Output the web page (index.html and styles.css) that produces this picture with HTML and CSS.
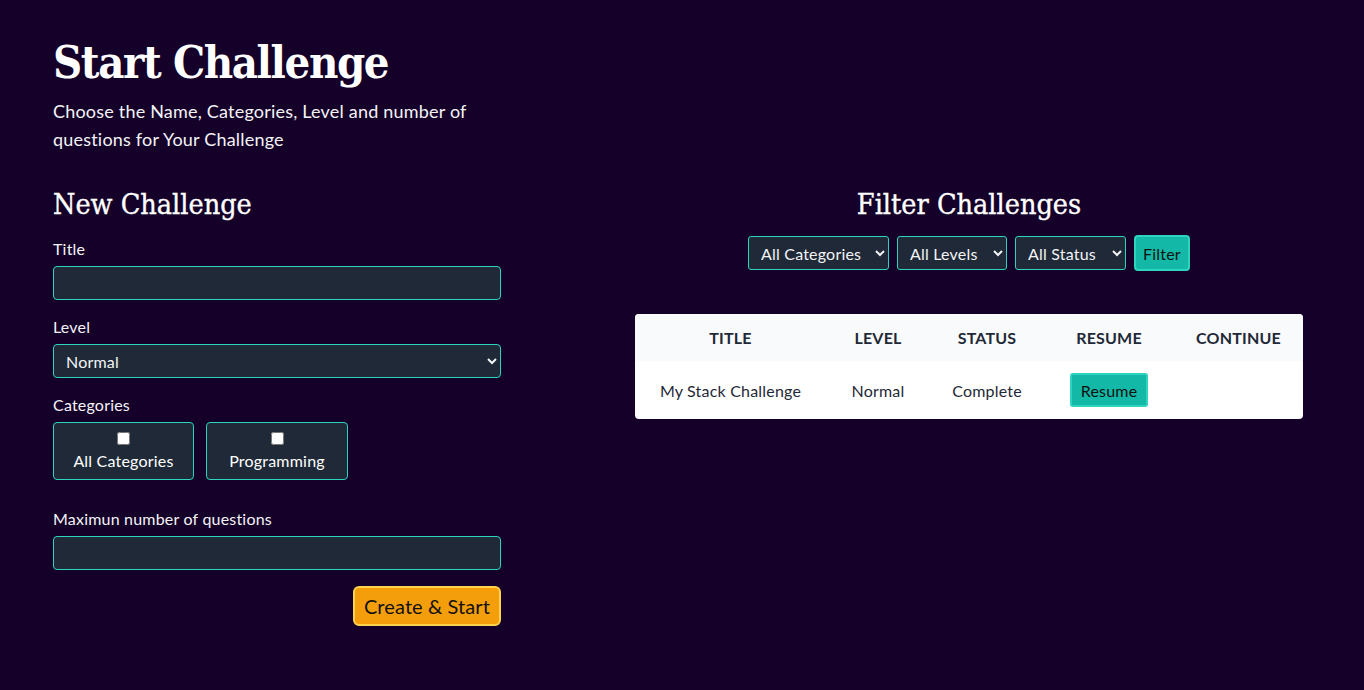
FILE: index.html
```html
<!DOCTYPE html>
<html lang="en">
<head>
<meta charset="utf-8">
<title>Start Challenge</title>
<link rel="stylesheet" href="styles.css">
</head>
<body>
<main class="page">
  <header class="intro">
    <h1 class="title">Start Challenge</h1>
    <p class="subtitle">Choose the Name, Categories, Level and number of questions for Your Challenge</p>
  </header>
  <div class="columns">
    <section class="new">
      <h2 class="section-title">New Challenge</h2>
      <form class="form">
        <label class="field-label" for="t">Title</label>
        <input class="field" id="t" type="text">
        <label class="field-label" for="l">Level</label>
        <select class="field select" id="l"><option>Normal</option></select>
        <span class="field-label">Categories</span>
        <div class="cats">
          <label class="cat"><input type="checkbox"><span>All Categories</span></label>
          <label class="cat cat-b"><input type="checkbox"><span>Programming</span></label>
        </div>
        <label class="field-label gap-top" for="m">Maximun number of questions</label>
        <input class="field" id="m" type="text">
        <div class="actions"><button type="button" class="btn-create">Create &amp; Start</button></div>
      </form>
    </section>
    <section class="filter">
      <h2 class="section-title center">Filter Challenges</h2>
      <div class="filters">
        <select class="fsel w1"><option>All Categories</option></select>
        <select class="fsel w2"><option>All Levels</option></select>
        <select class="fsel w3"><option>All Status</option></select>
        <button type="button" class="btn-filter">Filter</button>
      </div>
      <table class="table">
        <thead>
          <tr><th class="c1">Title</th><th class="c2">Level</th><th class="c3">Status</th><th class="c4">Resume</th><th class="c5">Continue</th></tr>
        </thead>
        <tbody>
          <tr><td>My Stack Challenge</td><td>Normal</td><td>Complete</td><td><button type="button" class="btn-resume">Resume</button></td><td></td></tr>
        </tbody>
      </table>
    </section>
  </div>
</main>
</body>
</html>
```
FILE: styles.css
```css
* { box-sizing: border-box; }
html, body { margin: 0; padding: 0; }
body {
  background: #150029;
  color: #ffffff;
  font-family: "Lato", "Noto Sans", sans-serif;
  letter-spacing: 0.2px;
  height: 690px;
  overflow: hidden;
}
.page { padding: 35px 0 0 53px; }
.title {
  font-family: "DejaVu Serif Condensed", "DejaVu Serif", serif;
  font-weight: 700;
  font-size: 45px;
  line-height: 56px;
  margin: 0;
  letter-spacing: -1.4px;
}
.subtitle {
  margin: 6px 0 0;
  width: 440px;
  font-size: 18px;
  line-height: 28px;
  color: #f3f4f6;
}
.columns {
  display: grid;
  grid-template-columns: 448px 668px;
  column-gap: 134px;
  margin-top: 32px;
}
.section-title {
  font-family: "DejaVu Serif Condensed", "DejaVu Serif", serif;
  font-weight: 400;
  font-size: 28.5px;
  line-height: 40px;
  letter-spacing: 0;
  margin: 0 0 14px;
  -webkit-text-stroke: 0.35px #ffffff;
}
.center { text-align: center; }
.form { display: flex; flex-direction: column; }
.field-label {
  font-size: 16px;
  line-height: 20px;
  margin-bottom: 7px;
  color: #f3f4f6;
}
.gap-top { margin-top: 29px; }
.field {
  height: 34px;
  width: 100%;
  background: #1f2937;
  border: 1px solid #2dd4bf;
  border-radius: 4px;
  color: #f3f4f6;
  font-family: inherit;
  letter-spacing: inherit;
  font-size: 16px;
  padding: 0 12px;
  margin-bottom: 17px;
}
.select { padding-left: 8px; }
.cats { display: flex; gap: 12px; }
.cat {
  display: flex;
  flex-direction: column;
  align-items: center;
  justify-content: center;
  height: 58px;
  width: 141px;
  background: #1f2937;
  border: 1px solid #2dd4bf;
  border-radius: 4px;
  font-size: 16px;
  line-height: 20px;
  padding-top: 1px;
}
.cat-b { width: 142px; }
.cat input { margin: 0 0 6px; width: 13px; height: 13px; }
.actions { display: flex; justify-content: flex-end; margin-top: -1px; }
.btn-create {
  height: 40px;
  padding: 0 9px;
  background: #f59e0b;
  border: 2px solid #fcd34d;
  border-radius: 6px;
  color: #111;
  font-family: inherit;
  letter-spacing: 0.1px;
  font-size: 20px;
}
.filters {
  display: flex;
  justify-content: center;
  align-items: center;
  gap: 8px;
  margin-top: -4px;
}
.fsel {
  height: 34px;
  background: #1f2937;
  border: 1px solid #2dd4bf;
  border-radius: 3px;
  color: #f3f4f6;
  font-family: inherit;
  letter-spacing: inherit;
  font-size: 16px;
  padding: 0 4px 0 8px;
}
.w1 { width: 141px; }
.w2 { width: 110px; }
.w3 { width: 111px; }
.btn-filter {
  height: 36px;
  width: 56px;
  background: #14b8a6;
  border: 2px solid #2dd4bf;
  border-radius: 4px;
  color: #111;
  font-family: inherit;
  letter-spacing: inherit;
  font-size: 16px;
  padding: 0;
}
.table {
  margin-top: 43px;
  width: 668px;
  border-collapse: separate;
  border-spacing: 0;
  background: #ffffff;
  border-radius: 4px;
  overflow: hidden;
  text-align: center;
}
.table th {
  background: #f9fafb;
  color: #1f2937;
  font-weight: 700;
  text-transform: uppercase;
  font-size: 16px;
  height: 47px;
  padding: 0;
}
.table td {
  color: #1f2937;
  font-size: 16px;
  height: 58px;
  padding: 0;
}
.c1 { width: 191px; }
.c2 { width: 104px; }
.c3 { width: 114px; }
.c4 { width: 130px; }
.c5 { width: 129px; }
.btn-resume {
  height: 34px;
  width: 78px;
  background: #14b8a6;
  border: 2px solid #2dd4bf;
  border-radius: 3px;
  color: #111;
  font-family: inherit;
  letter-spacing: inherit;
  font-size: 16px;
  padding: 0;
}
```
